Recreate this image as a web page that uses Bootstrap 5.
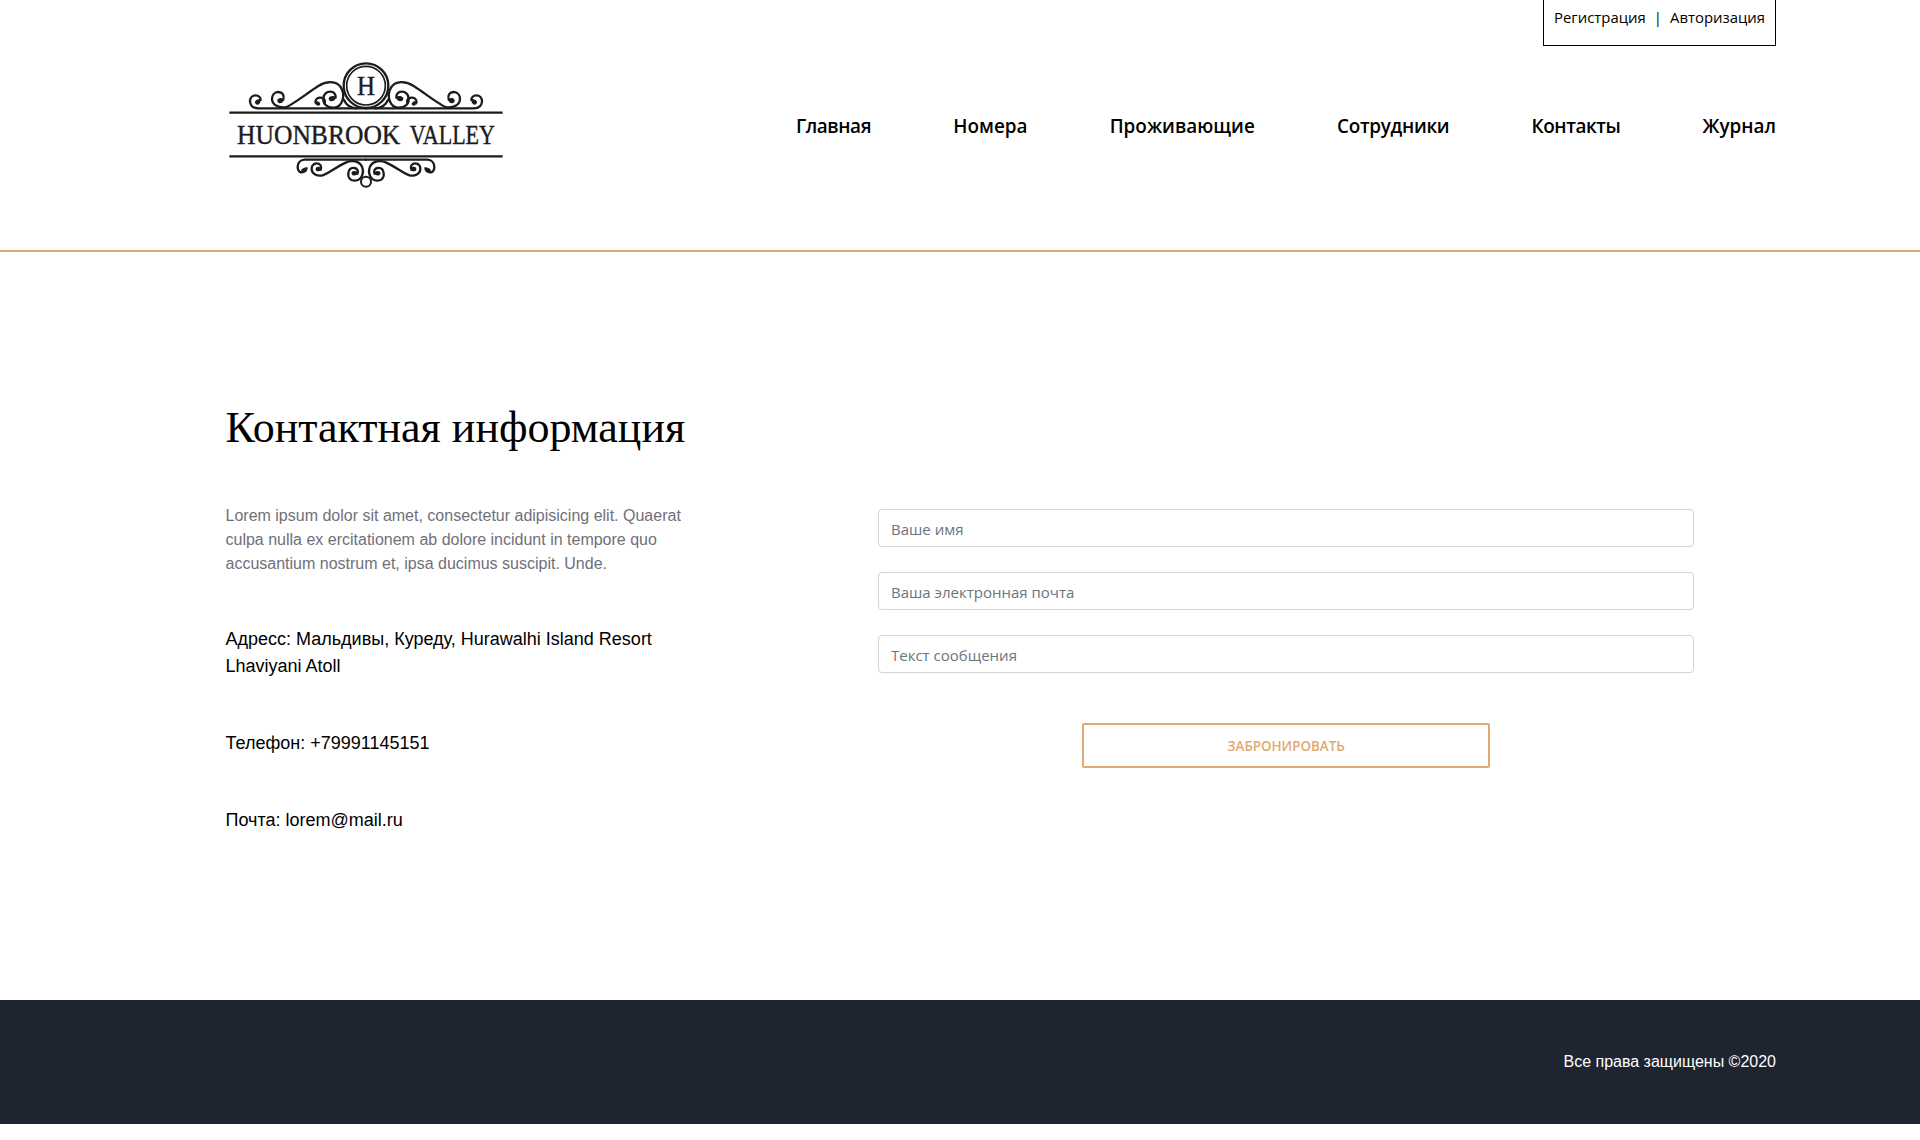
<!DOCTYPE html>
<html lang="ru">
<head>
<meta charset="utf-8">
<meta name="viewport" content="width=device-width, initial-scale=1">
<title>Контакты — Huonbrook Valley</title>
<link href="https://cdn.jsdelivr.net/npm/bootstrap@5.3.0/dist/css/bootstrap.min.css" rel="stylesheet">
<style>
  body { font-family: "Open Sans", "Noto Sans", sans-serif; color: #000; background: #fff; overflow-x: hidden; }
  a { color: #000; text-decoration: none; }
  .page-wrap { padding-left: 225.5px; padding-right: 144px; }
  .site-header { height: 252px; border-bottom: 2px solid #dfa974; }
  .account-box { width: 233px; height: 46px; border: 1px solid #000; border-top: 0; font-size: 14.9px; line-height: 24px; padding: 5px 10px 0; white-space: nowrap; }
  .logo-img { width: 300px; height: 150px; margin: 4px 0 0 -10.5px; display: block; }
  .logo-img text { font-family: "Liberation Serif", serif; fill: #1c1c1c; stroke: #1c1c1c; stroke-width: 1.2px; }
  .main-nav { gap: 82.2px; font-size: 18.9px; font-weight: 600; line-height: 28px; margin-top: 66px; }
  .main-nav .tight { letter-spacing: -.42px; }
  .main-nav .snug { letter-spacing: -.3px; }
  .content-area { height: 748px; padding-top: 146px; }
  .page-heading { font-family: "Liberation Serif", serif; font-size: 44px; line-height: 60px; font-weight: 400; margin: 0 0 41px; }
  .info-col { width: 470px; font-family: "Liberation Sans", sans-serif; font-size: 18px; line-height: 27px; }
  .intro-text { color: #707079; font-size: 16px; line-height: 24px; margin: 5px 0 50px; }
  .info-col .info-line { margin: 0 0 50px; }
  .form-col { width: 816px; margin-left: 182.5px; margin-top: 10px; }
  .form-col .form-control { height: 38px; font-size: 15px; border-color: #ced4da; border-radius: 4px; margin-bottom: 25px; padding: 7px 12px 6px; }
  .form-col .form-control::placeholder { color: #6c757d; }
  .book-btn { width: 408px; height: 45px; border: 2px solid #dfa974; border-radius: 2px; color: #dfa974; font-size: 13.4px; font-weight: 600; padding: 2px 0 0; margin-top: 25px; }
  .site-footer { height: 124px; background: #1e2430; color: #fff; font-family: "Liberation Sans", sans-serif; font-size: 16px; line-height: 24px; padding-top: 50px; }
</style>
</head>
<body>
<header class="site-header page-wrap">
  <div class="d-flex justify-content-end">
    <div class="account-box d-flex justify-content-between"><a href="#">Регистрация</a><span>|</span><a href="#">Авторизация</a></div>
  </div>
  <div class="d-flex justify-content-between align-items-start">
    <a href="#" aria-label="Huonbrook Valley">
      <svg class="logo-img" viewBox="0 0 900 450">
        <defs>
          <g id="half" fill="none" stroke="#1c1c1c" stroke-width="7" stroke-linecap="round">
            <path d="M453 175H130C112 175 105 164 105 154C105 143 112 136 122 136C131 136 137 143 137 150"/>
            <path d="M205 149C209 136 202 126 190 126C178 126 171 136 171 147C171 164 190 174 210 172C226 170 278 128 310 108C333 93 364 91 378 113C393 138 381 172 357 173C335 174 323 160 325 145C327 131 336 125 346 125C357 125 363 133 362 143"/>
            <path d="M329 158C332 147 322 142 313 143C303 145 299 154 303 160"/>
            <path d="M387 150C394 166 407 174 425 175"/>
            <path d="M453 329H268C254 330 248 341 248 352C248 364 256 370 264 366"/>
            <path d="M317 359C322 348 314 340 305 340C294 340 289 350 290 358C291 371 306 380 323 376C337 373 365 350 392 338C410 329 433 333 441 350C449 370 439 391 420 392C404 393 398 380 400 369C402 356 411 353 418 354C427 355 431 364 427 371"/>
          </g>
          <g id="buds" fill="#1c1c1c">
            <path d="M137 147C138 160 129 168 122 162C116 154 124 147 137 147ZM207 146C206 159 194 164 188 156C183 147 194 141 207 146ZM363 140C362 153 348 158 342 150C337 142 349 135 363 140ZM302 155C308 151 319 158 315 165C308 171 301 164 302 155ZM278 352C279 365 267 374 259 366C255 357 268 352 278 352ZM320 356C316 365 305 367 302 359C300 350 313 347 320 356ZM429 367C427 378 414 380 410 372C407 363 418 360 429 367Z"/>
          </g>
        </defs>
        <use href="#half"/><use href="#buds"/>
        <g transform="translate(906 0) scale(-1 1)"><use href="#half"/><use href="#buds"/></g>
        <circle cx="453" cy="107" r="67" fill="#fff" stroke="#1c1c1c" stroke-width="7"/>
        <circle cx="453" cy="107" r="58" fill="none" stroke="#1c1c1c" stroke-width="5"/>
        <circle cx="453" cy="395" r="15" fill="#fff" stroke="#1c1c1c" stroke-width="6"/>
        <path d="M43 188H863M43 319H863" stroke="#1c1c1c" stroke-width="6.5"/>
        <text x="426" y="135" font-size="80" textLength="54" lengthAdjust="spacingAndGlyphs">H</text>
        <text x="66" y="281" font-size="81" textLength="490" lengthAdjust="spacingAndGlyphs">HUONBROOK</text>
        <text x="584" y="281" font-size="81" textLength="256" lengthAdjust="spacingAndGlyphs">VALLEY</text>
      </svg>
    </a>
    <nav class="main-nav d-flex">
      <a href="#" class="tight">Главная</a><a href="#">Номера</a><a href="#">Проживающие</a><a href="#" class="snug">Сотрудники</a><a href="#" class="tight">Контакты</a><a href="#">Журнал</a>
    </nav>
  </div>
</header>
<main class="content-area page-wrap">
  <h1 class="page-heading">Контактная информация</h1>
  <div class="d-flex align-items-start">
    <section class="info-col">
      <p class="intro-text">Lorem ipsum dolor sit amet, consectetur adipisicing elit. Quaerat culpa nulla ex ercitationem ab dolore incidunt in tempore quo accusantium nostrum et, ipsa ducimus suscipit. Unde.</p>
      <p class="info-line">Адресс: Мальдивы, Куреду, Hurawalhi Island Resort Lhaviyani Atoll</p>
      <p class="info-line">Телефон: +79991145151</p>
      <p class="info-line">Почта: lorem@mail.ru</p>
    </section>
    <form class="form-col d-flex flex-column align-items-center">
      <input class="form-control" type="text" placeholder="Ваше имя">
      <input class="form-control" type="text" placeholder="Ваша электронная почта">
      <input class="form-control" type="text" placeholder="Текст сообщения">
      <button class="book-btn btn" type="button">ЗАБРОНИРОВАТЬ</button>
    </form>
  </div>
</main>
<footer class="site-footer page-wrap text-end">Все права защищены ©2020</footer>
<script src="https://cdn.jsdelivr.net/npm/bootstrap@5.3.0/dist/js/bootstrap.bundle.min.js"></script>
</body>
</html>
